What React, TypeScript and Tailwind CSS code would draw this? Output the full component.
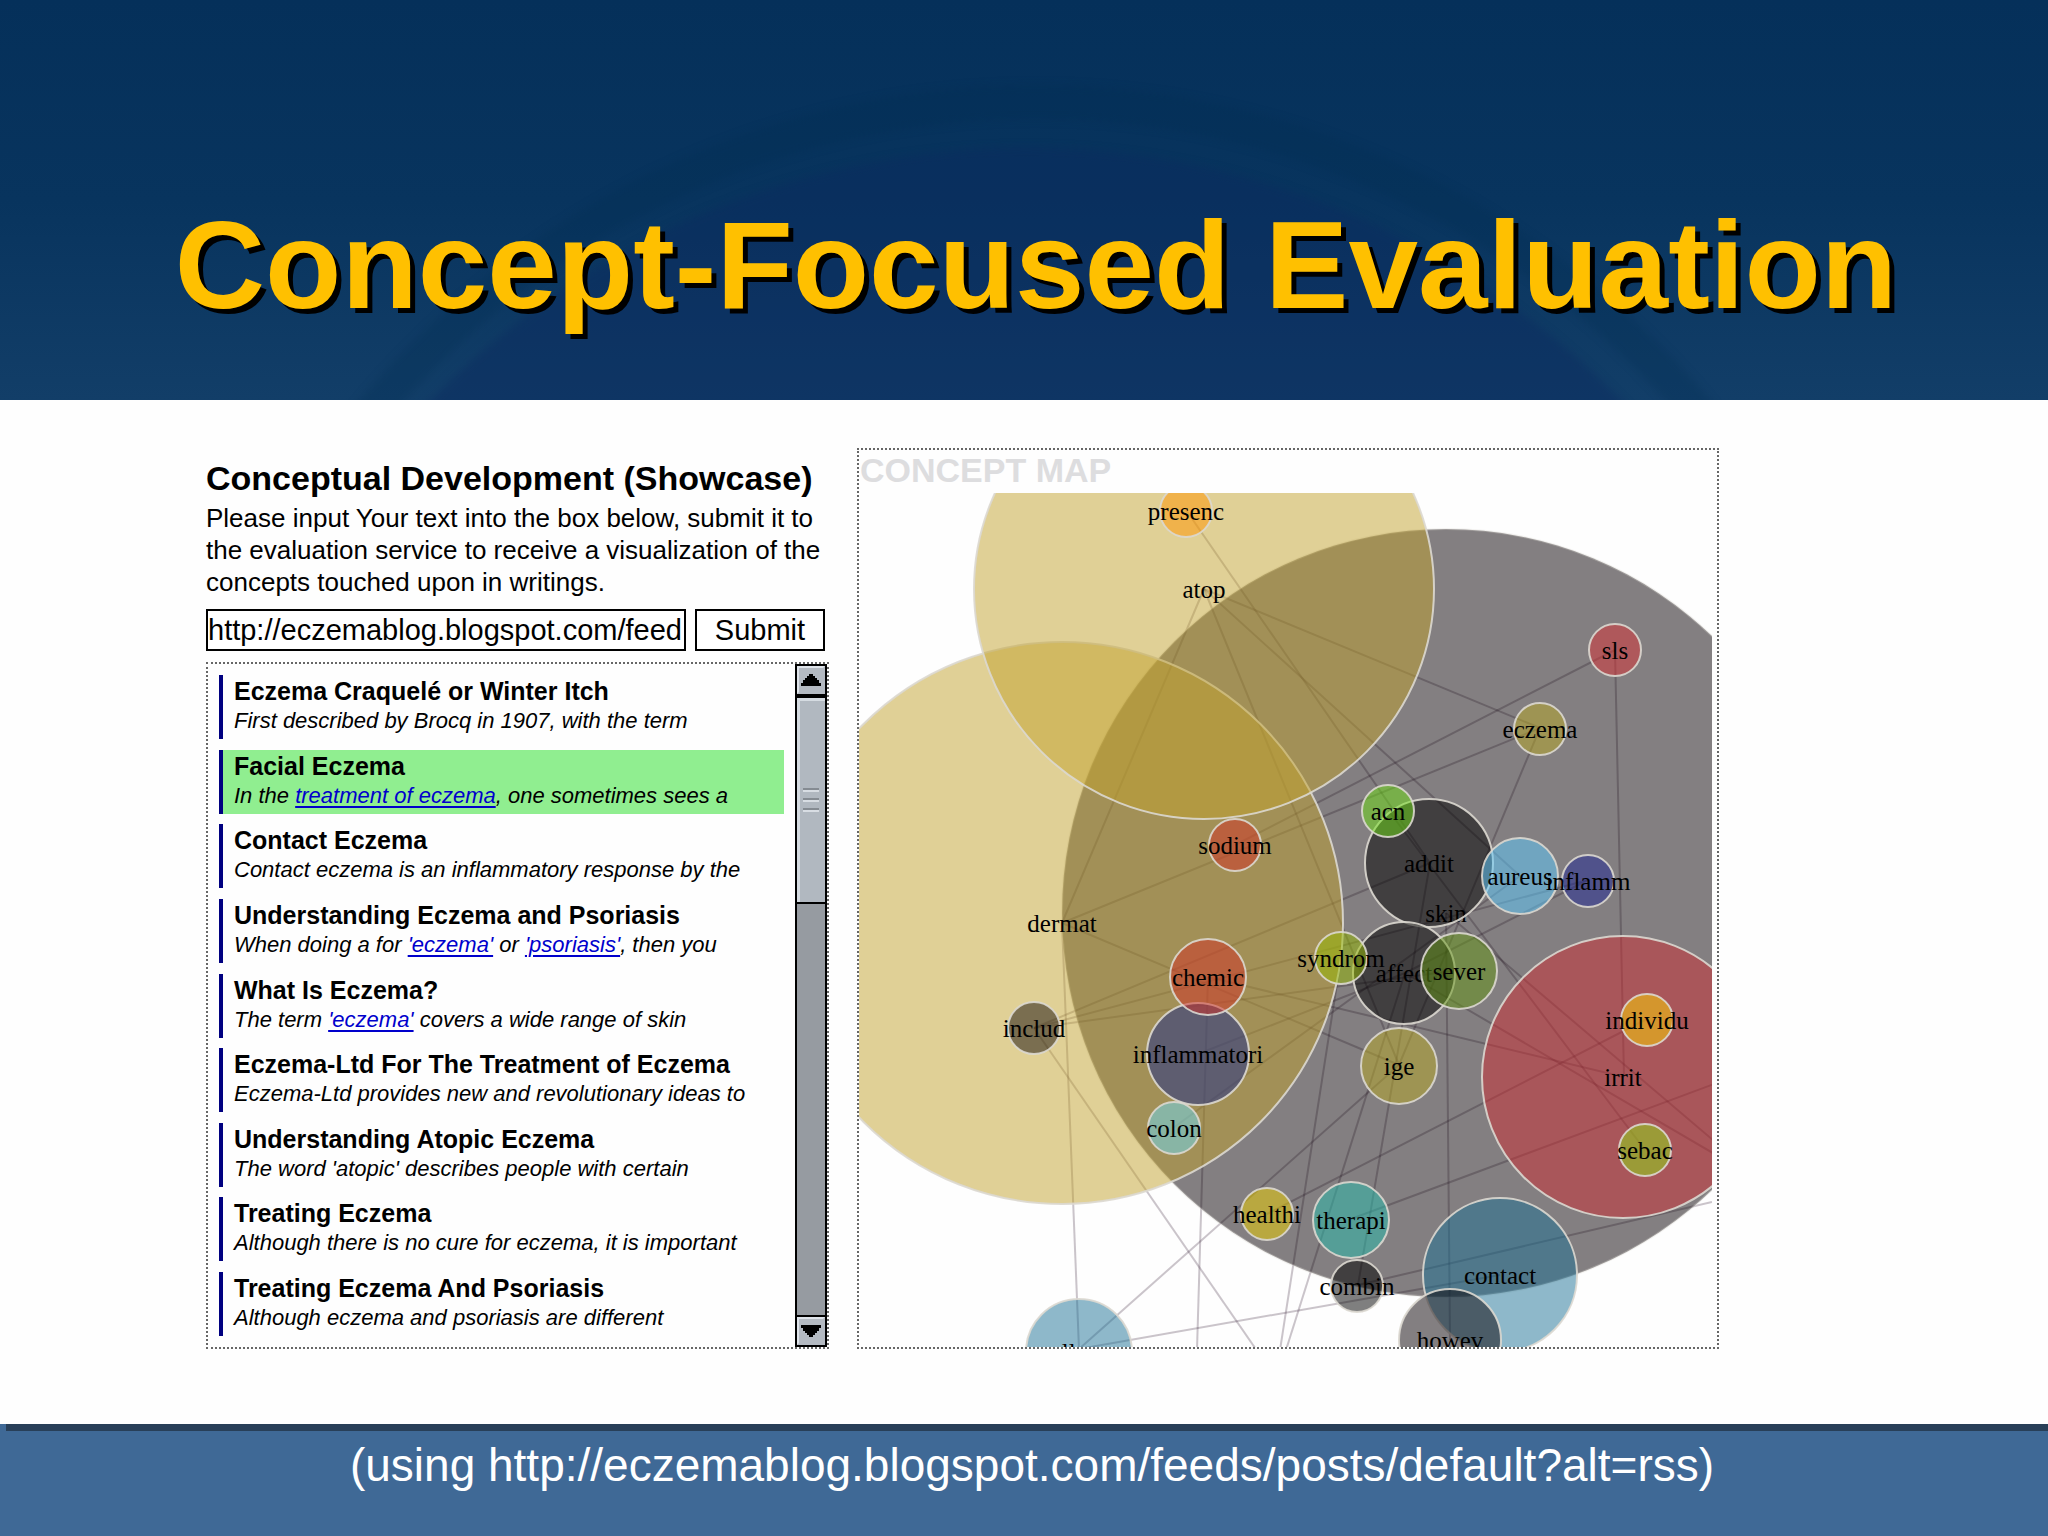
type Node = { label: string; x: number; y: number; r: number; color: string };

const posts = [
  { title: "Eczema Craquelé or Winter Itch", parts: ["First described by Brocq in 1907, with the term"] },
  { title: "Facial Eczema", parts: ["In the ", "treatment of eczema", ", one sometimes sees a"], active: true },
  { title: "Contact Eczema", parts: ["Contact eczema is an inflammatory response by the"] },
  { title: "Understanding Eczema and Psoriasis", parts: ["When doing a for ", "'eczema'", " or ", "'psoriasis'", ", then you"] },
  { title: "What Is Eczema?", parts: ["The term ", "'eczema'", " covers a wide range of skin"] },
  { title: "Eczema-Ltd For The Treatment of Eczema", parts: ["Eczema-Ltd provides new and revolutionary ideas to"] },
  { title: "Understanding Atopic Eczema", parts: ["The word 'atopic' describes people with certain"] },
  { title: "Treating Eczema", parts: ["Although there is no cure for eczema, it is important"] },
  { title: "Treating Eczema And Psoriasis", parts: ["Although eczema and psoriasis are different"] },
];

// painted in order, later nodes cover earlier ones
const nodes: Node[] = [
  { label: "skin", x: 1446, y: 913, r: 384, color: "#070004" },
  { label: "dermat", x: 1062, y: 923, r: 281, color: "#c1a12d" },
  { label: "atop", x: 1204, y: 589, r: 230, color: "#c1a12d" },
  { label: "irrit", x: 1623, y: 1077, r: 141, color: "#cf2d34" },
  { label: "addit", x: 1429, y: 863, r: 64, color: "#000000" },
  { label: "contact", x: 1500, y: 1275, r: 77, color: "#1e7296" },
  { label: "allerg", x: 1079, y: 1352, r: 53, color: "#1e7296" },
  { label: "affect", x: 1404, y: 973, r: 51, color: "#000000" },
  { label: "howev", x: 1450, y: 1340, r: 51, color: "#070004" },
  { label: "inflammatori", x: 1198, y: 1054, r: 51, color: "#1a2989" },
  { label: "chemic", x: 1208, y: 977, r: 38, color: "#d22f25" },
  { label: "aureus", x: 1520, y: 876, r: 38, color: "#5dcbff" },
  { label: "sever", x: 1459, y: 971, r: 38, color: "#639514" },
  { label: "ige", x: 1399, y: 1066, r: 38, color: "#b9a926" },
  { label: "therapi", x: 1351, y: 1220, r: 38, color: "#27bdae" },
  { label: "acn", x: 1388, y: 811, r: 26, color: "#6ddf14" },
  { label: "inflamm", x: 1588, y: 881, r: 26, color: "#1d2596" },
  { label: "sls", x: 1615, y: 650, r: 26, color: "#db3136" },
  { label: "eczema", x: 1540, y: 729, r: 26, color: "#b9a926" },
  { label: "syndrom", x: 1341, y: 958, r: 26, color: "#96b900" },
  { label: "individu", x: 1647, y: 1020, r: 26, color: "#ffd600" },
  { label: "sebac", x: 1645, y: 1150, r: 26, color: "#8ee014" },
  { label: "healthi", x: 1267, y: 1214, r: 26, color: "#f0d100" },
  { label: "combin", x: 1357, y: 1286, r: 26, color: "#000000" },
  { label: "sodium", x: 1235, y: 845, r: 26, color: "#d22f25" },
  { label: "colon", x: 1174, y: 1128, r: 26, color: "#6ed9f3" },
  { label: "includ", x: 1034, y: 1028, r: 26, color: "#140c0a" },
  { label: "presenc", x: 1186, y: 511, r: 26, color: "#ff9400" },
];

const links = [
  [1186, 510, 1430, 863],
  [1204, 589, 1540, 728],
  [1204, 589, 1399, 1065],
  [1204, 589, 1520, 876],
  [1204, 589, 1062, 923],
  [1235, 845, 1615, 650],
  [1062, 923, 1540, 728],
  [1062, 923, 1399, 1065],
  [1062, 923, 1079, 1349],
  [1034, 1028, 1430, 863],
  [1034, 1028, 1588, 880],
  [1034, 1028, 1459, 970],
  [1034, 1028, 1262, 1358],
  [1208, 977, 1624, 1077],
  [1208, 977, 1197, 1350],
  [1198, 1054, 1405, 973],
  [1173, 1128, 1520, 876],
  [1079, 1349, 1399, 1065],
  [1079, 1349, 1500, 1275],
  [1358, 1285, 1712, 1202],
  [1267, 1214, 1647, 1019],
  [1351, 1219, 1730, 1078],
  [1446, 913, 1450, 1340],
  [1615, 650, 1624, 1077],
  [1540, 728, 1399, 1065],
  [1341, 958, 1280, 1350],
  [1405, 973, 1286, 1350],
  [1430, 863, 1358, 1285],
  [1388, 810, 1645, 1150],
  [1446, 913, 1740, 1163],
  [1405, 973, 1730, 1163],
  [1405, 973, 1588, 880],
];

function HeaderArc() {
  return (
    <svg
      className="absolute inset-0 h-full w-full"
      viewBox="0 0 2048 400"
      preserveAspectRatio="none"
      aria-hidden="true"
    >
      <defs>
        <filter id="soft" x="-5%" y="-5%" width="110%" height="110%" colorInterpolationFilters="sRGB">
          <feGaussianBlur stdDeviation="4" />
        </filter>
      </defs>
      <g filter="url(#soft)">
        <circle cx="1035" cy="966" r="864" fill="none" stroke="#002b50" strokeOpacity="0.25" strokeWidth="34" />
        <circle cx="1026" cy="976" r="828" fill="#0c2a60" fillOpacity="0.45" />
      </g>
    </svg>
  );
}

function PostList() {
  return (
    <ul className="flex flex-1 flex-col justify-between p-[11px]">
      {posts.map((post) => (
        <li
          key={post.title}
          className={`h-16 border-l-4 border-[#000080] pl-[11px] ${post.active ? "bg-[#90ee90]" : ""}`}
        >
          <h3 className="text-[25px] leading-8 font-bold whitespace-nowrap">{post.title}</h3>
          <p className="text-[22px] leading-7 whitespace-nowrap italic">
            {post.parts.map((part, i) =>
              i % 2 ? (
                <a key={i} href="#" className="text-[#0000cc] underline decoration-2 underline-offset-3">
                  {part}
                </a>
              ) : (
                <span key={i}>{part}</span>
              ),
            )}
          </p>
        </li>
      ))}
    </ul>
  );
}

function ScrollBar() {
  const button =
    "flex h-7 w-full shrink-0 items-center justify-center border-2 border-t-[#dfe4ea] border-r-[#b4bac2] border-b-[#b4bac2] border-l-[#dfe4ea] bg-[#b4bac2]";

  return (
    <div className="flex w-8 shrink-0 flex-col border-2 border-black bg-[#969ba1]">
      <button type="button" aria-label="Scroll up" className={button}>
        <svg width="20" height="12" viewBox="0 0 20 12">
          <path d="M8 0h4v2h2v2h2v2h2v3h2v3H0V9h2V6h2V4h2V2h2z" />
        </svg>
      </button>
      <div className="flex h-[210px] flex-col items-center justify-center gap-[6px] border-t-4 border-b-2 border-black bg-[#b1b8c0] shadow-[inset_3px_3px_0_#d5dbe1]">
        {[0, 1, 2].map((n) => (
          <div key={n} className="h-1 w-4 border-t-2 border-b-2 border-t-[#858b92] border-b-[#d8dde3]" />
        ))}
      </div>
      <div className="flex-1" />
      <div className="border-t-2 border-black">
        <button type="button" aria-label="Scroll down" className={button}>
          <svg width="20" height="12" viewBox="0 0 20 12">
            <path d="M0 0h20v3h-2v3h-2v2h-2v2h-2v2H8v-2H6V8H4V6H2V3H0z" />
          </svg>
        </button>
      </div>
    </div>
  );
}

function ConceptMap() {
  return (
    <section className="flex w-[862px] flex-col border-2 border-dotted border-[#666] pr-[5px]">
      <h2 className="h-[43px] pl-px text-[34px] leading-10 font-bold text-[#dddddf]">CONCEPT MAP</h2>
      <svg className="w-full flex-1" viewBox="859 493 853 854" preserveAspectRatio="xMinYMin slice">
        {links.map(([x1, y1, x2, y2], i) => (
          <line key={i} x1={x1} y1={y1} x2={x2} y2={y2} stroke="#301830" strokeOpacity="0.25" strokeWidth="2" />
        ))}
        {nodes.map((node) => (
          <g key={node.label}>
            <circle
              cx={node.x}
              cy={node.y}
              r={node.r}
              fill={node.color}
              fillOpacity="0.5"
              stroke="#dcd8d0"
              strokeOpacity={node.label === "skin" ? 0.3 : 0.9}
              strokeWidth="2"
            />
            <text
              x={node.x}
              y={node.y + 9}
              textAnchor="middle"
              className="font-['Liberation_Serif',serif] text-[25px]"
            >
              {node.label}
            </text>
          </g>
        ))}
      </svg>
    </section>
  );
}

export default function App() {
  return (
    <div className="flex min-h-screen flex-col bg-[#fefefe] font-['Liberation_Sans',Arial,sans-serif] text-black">
      <header className="relative flex h-[400px] justify-center overflow-hidden bg-linear-to-b from-[#05305a] via-[#08345e] to-[#123e68] pt-[193px]">
        <HeaderArc />
        <h1 className="relative pl-6 text-[125px] leading-[144px] font-bold whitespace-nowrap text-[#ffc000] [text-shadow:5px_5px_0_#000]">
          Concept-Focused Evaluation
        </h1>
      </header>

      <main className="flex flex-1 items-start gap-7 pt-12 pl-[206px]">
        <section className="flex h-[901px] w-[623px] flex-col pt-3">
          <h2 className="text-[34px] leading-9 font-bold whitespace-nowrap">Conceptual Development (Showcase)</h2>
          <p className="mt-[6px] text-[26px] leading-8">
            Please input Your text into the box below, submit it to the evaluation service to receive a visualization of
            the concepts touched upon in writings.
          </p>
          <form className="mt-[11px] flex gap-[9px] pr-1" onSubmit={(e) => e.preventDefault()}>
            <input
              type="text"
              aria-label="Feed address"
              defaultValue="http://eczemablog.blogspot.com/feed"
              className="h-[42px] min-w-0 flex-1 border-2 border-black bg-white text-[29px] leading-9"
            />
            <button type="submit" className="h-[42px] w-[130px] border-2 border-black bg-white text-[29px] leading-9">
              Submit
            </button>
          </form>
          <div className="mt-[11px] flex flex-1 border-2 border-dotted border-[#666]">
            <PostList />
            <ScrollBar />
          </div>
        </section>
        <div className="flex h-[901px]">
          <ConceptMap />
        </div>
      </main>

      <footer className="h-28 bg-[#3f6996]">
        <div className="ml-[6px] h-[7px] bg-[#283f58]" />
        <p className="pt-[8px] pl-4 text-center text-[46px] leading-[52px] text-white">
          (using http://eczemablog.blogspot.com/feeds/posts/default?alt=rss)
        </p>
      </footer>
    </div>
  );
}
